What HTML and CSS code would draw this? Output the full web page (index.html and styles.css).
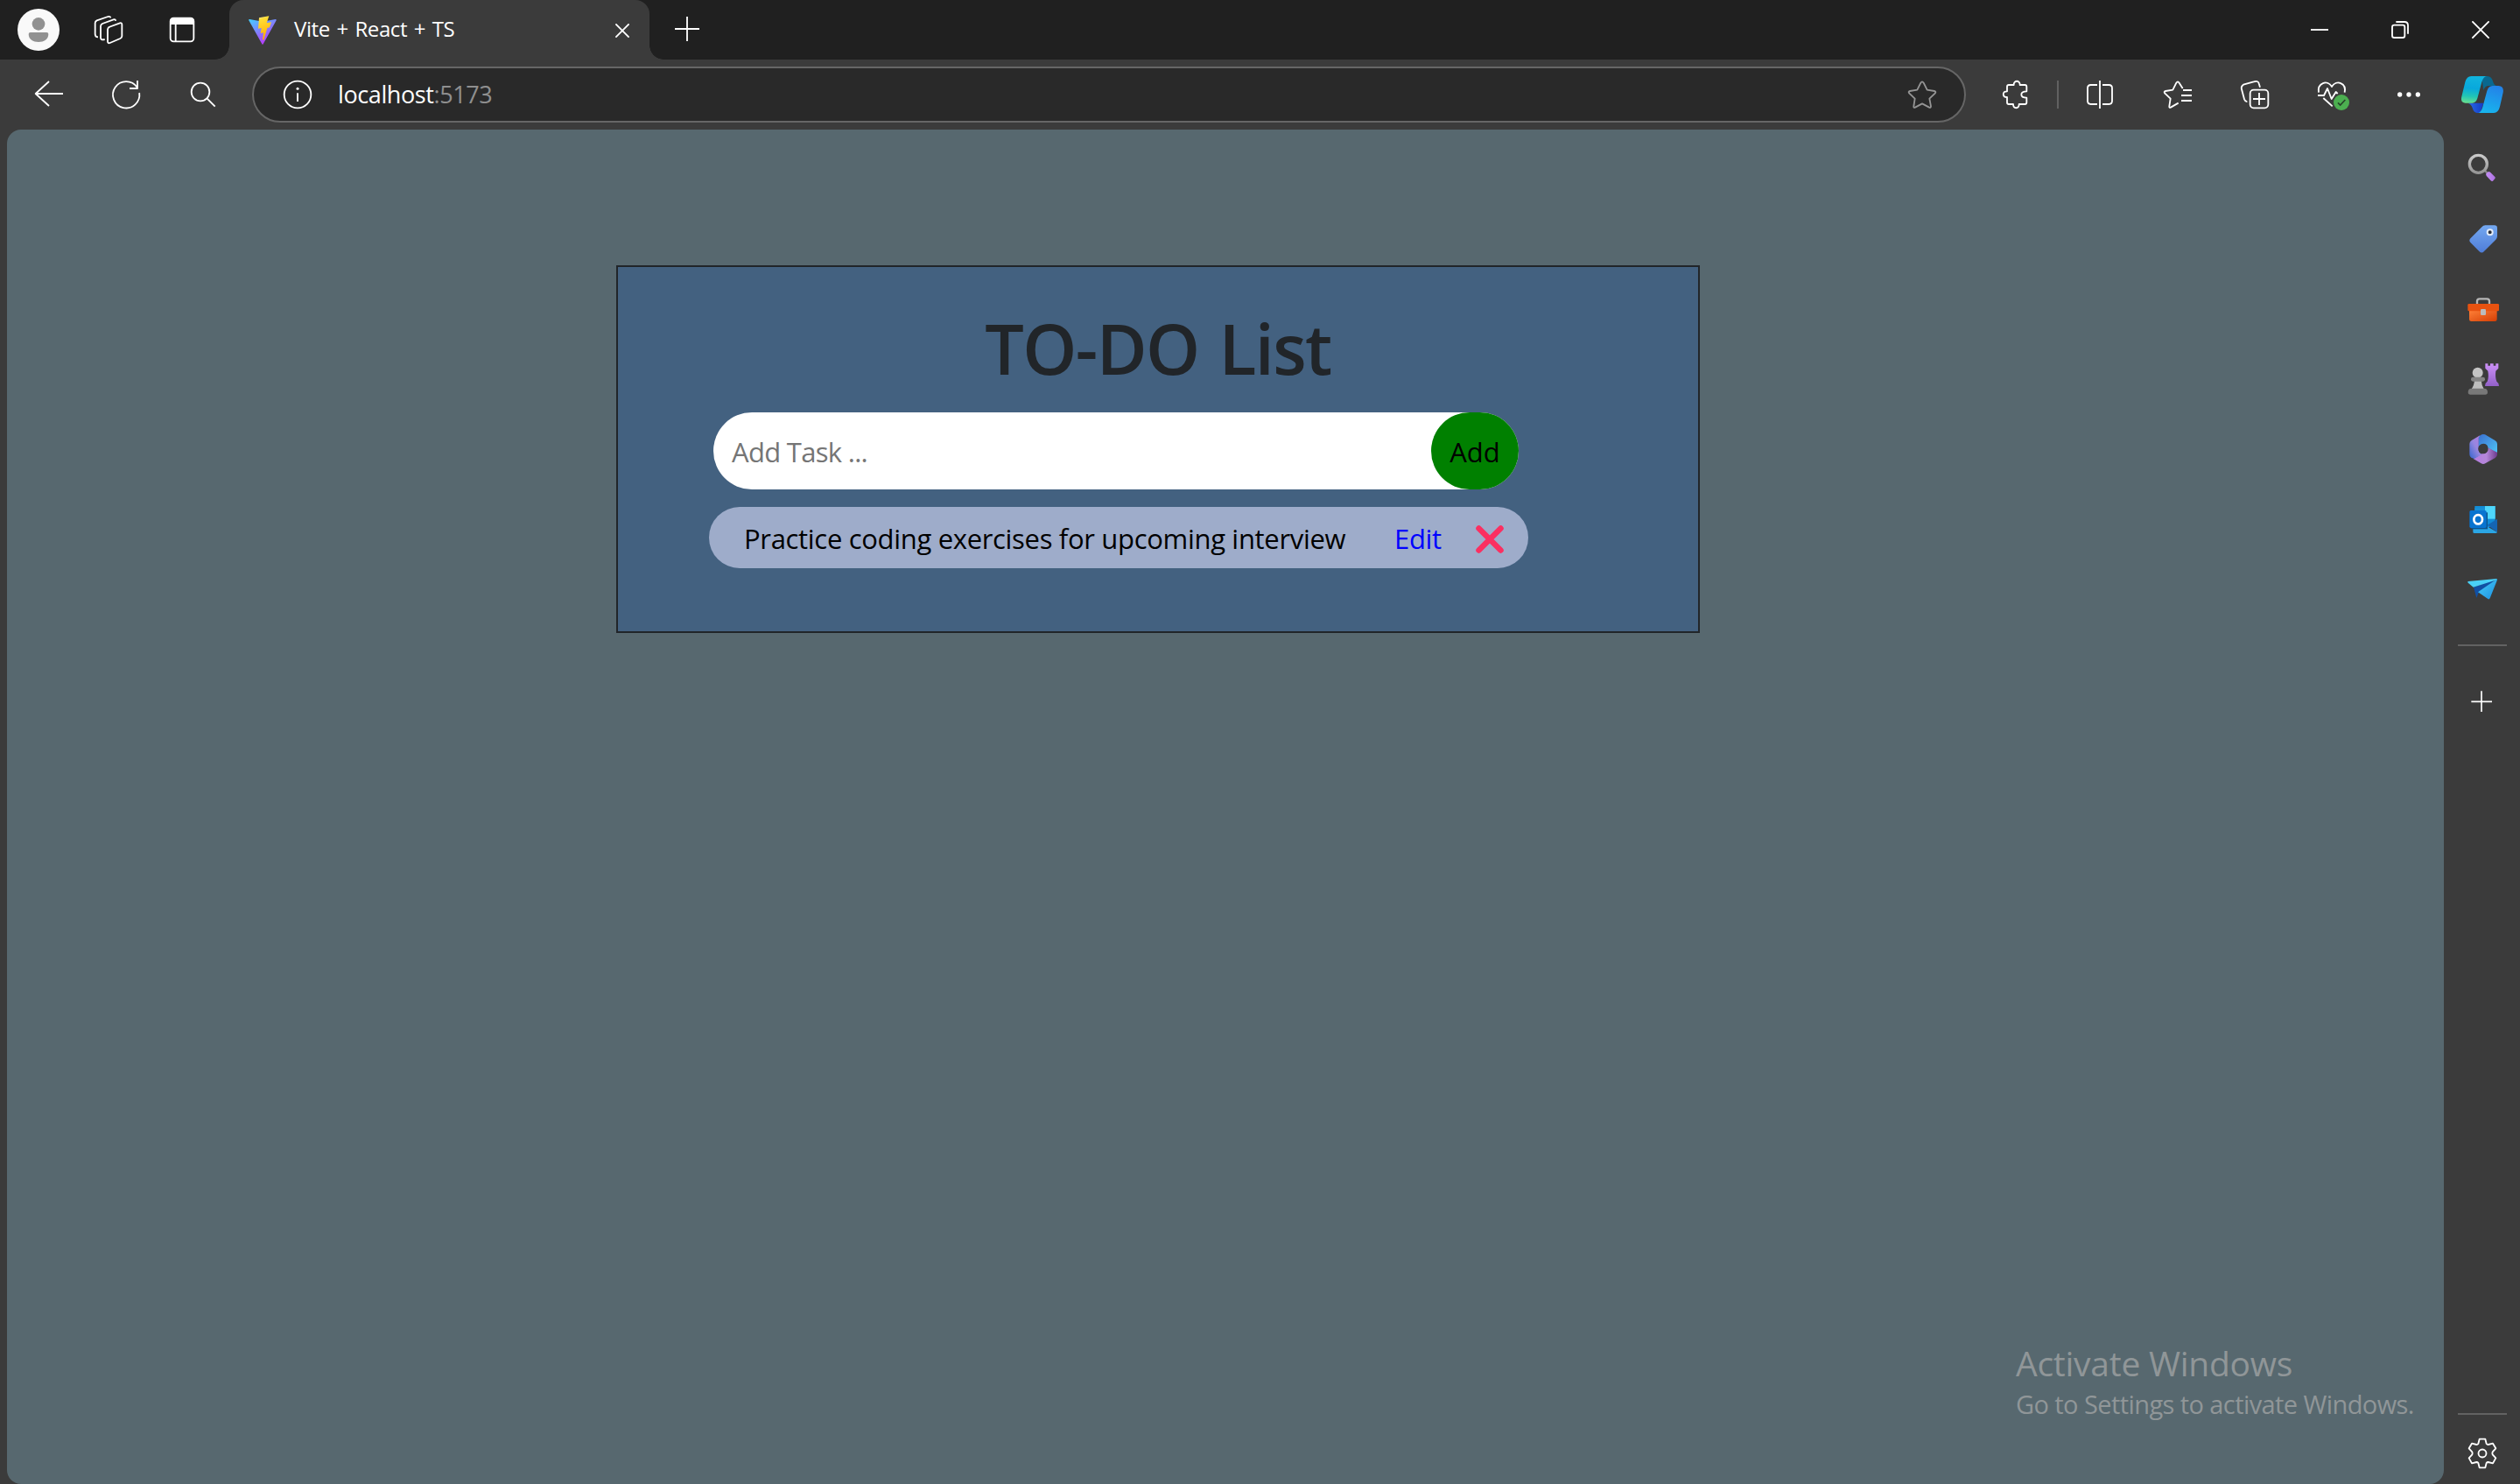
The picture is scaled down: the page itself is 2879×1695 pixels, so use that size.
FILE: index.html
```html
<!DOCTYPE html>
<html lang="en">
<head>
<meta charset="utf-8">
<title>Vite + React + TS</title>
<link rel="stylesheet" href="styles.css">
</head>
<body>
<div class="browser">
  <header class="titlebar">
    <svg class="icon avatar" viewBox="60 30 144 144"><circle cx="132" cy="102" r="72" fill="#f9f9f9"/><circle cx="132" cy="82" r="22" fill="#919191"/><path d="M104 111H160Q166 111 166 117C166 135 150 144 132 144S98 135 98 117Q98 111 104 111Z" fill="#919191"/></svg>
    <svg class="icon workspaces" viewBox="300 30 144 144"><g class="line"><path d="M373 93L411 79Q418 77 418 84V124Q418 129 412 132L377 147Q369 150 369 142V101Q369 95 375 93Z"/><path d="M359 135Q345 139 345 129V90Q345 84 351 81L389 67Q395 65 397 71"/><path d="M336 127Q326 127 326 117V79Q326 73 332 70L370 57Q378 55 379 61"/></g></svg>
    <svg class="icon tabs-menu" viewBox="552 30 144 144"><rect x="584" y="62" width="80" height="80" rx="11" class="line"/><path d="M582 84V74Q582 60 596 60H652Q666 60 666 74V84Z" fill="#fff"/><path d="M602 84V142" class="line"/></svg>
    <div class="tab">
      <svg class="favicon" viewBox="852 52 96 99"><defs><linearGradient id="va" x1="0" y1="0" x2=".6" y2="1"><stop offset="0" stop-color="#41d1ff"/><stop offset="1" stop-color="#bd34fe"/></linearGradient><linearGradient id="vb" x1=".4" y1="0" x2=".6" y2="1"><stop offset="0" stop-color="#ffea83"/><stop offset=".1" stop-color="#ffdd35"/><stop offset="1" stop-color="#ffa800"/></linearGradient></defs><path d="M852 66Q852 64 856 64L900 72L944 64Q948 64 947 68L902 149Q900 152 898 149Z" fill="url(#va)"/><path d="M888 59L922 53L914 77L930 74L924 92L916 94L904 135L900 134L903 110L893 112L896 94L885 96Z" fill="url(#vb)"/></svg>
      <span class="tab-title">Vite + React + TS</span>
      <svg class="tab-close" viewBox="0 0 48 48"><path class="line" d="M1 1L47 47M47 1L1 47"/></svg>
    </div>
    <svg class="new-tab" viewBox="0 0 84 84"><path class="line" d="M42 0V84M0 42H84"/></svg>
    <div class="window-controls">
      <svg viewBox="0 0 60 60"><path class="line" d="M0 30H60"/></svg>
      <svg viewBox="0 0 60 60"><g class="line"><rect x="3" y="14" width="43" height="43" rx="7"/><path d="M16 3H45Q57 3 57 15V44"/></g></svg>
      <svg viewBox="0 0 60 60"><path class="line" d="M1 1L59 59M59 1L1 59"/></svg>
    </div>
  </header>

  <nav class="toolbar">
    <div class="nav-buttons">
      <svg class="icon" viewBox="96 252 144 144"><path class="line" d="M122 321H216M168 279L122 321L168 363"/></svg>
      <svg class="icon" viewBox="360 252 144 144"><path class="line" d="M477.500 318A45.500 45.500 0 1 1 470 299M471 276V303H444"/></svg>
      <svg class="icon" viewBox="624 252 144 144"><g class="line"><circle cx="687" cy="315" r="31"/><path d="M710 338L737 365"/></g></svg>
    </div>
    <div class="address">
      <svg class="icon info" viewBox="948 252 144 144"><g class="line"><circle cx="1020" cy="324" r="46"/><path d="M1020 319V348"/></g><circle cx="1020" cy="304" r="4.500" fill="#fff"/></svg>
      <div class="url">localhost<span class="port">:5173</span></div>
      <svg class="icon" viewBox="96 252 144 144"><path class="line muted" d="M163 284Q168 276 173 284L185 308L210 312Q217 314 212 320L193 338L198 364Q198 370 192 368L168 355L144 368Q138 370 139 364L143 338L124 320Q119 314 126 312L151 308Z"/></svg>
    </div>
    <div class="actions">
      <svg class="icon" viewBox="414 252 144 144"><path class="line" d="M465 291H482C481 274 504 274 503 291H520Q526 291 526 297V313C502 313 502 335 526 335V351Q526 357 520 357H500C500 374 480 374 480 357H465Q459 357 459 351V333C442 333 442 313 459 313V297Q459 291 465 291Z"/></svg>
      <span class="separator"></span>
      <svg class="icon" viewBox="708 252 144 144"><path class="line" d="M768 291H746Q735 291 735 302V346Q735 357 746 357H768M786 291H808Q819 291 819 302V346Q819 357 808 357H786M777 276V372"/></svg>
      <svg class="icon" viewBox="972 252 144 144"><path class="line" d="M1061 303L1049 284Q1044 276 1039 284L1027 308L1002 312Q995 314 1000 320L1019 338L1015 364Q1014 370 1020 368L1046 353M1062 309H1092M1056 327H1092M1056 345H1092"/></svg>
      <svg class="icon" viewBox="156 252 144 144"><g class="line"><rect x="212" y="308" width="62" height="62" rx="12"/><path d="M243 318V360M222 339H264M202 348Q196 349 192 340L183 306Q180 296 189 290L224 280Q239 275 242 286L246 299"/></g></svg>
      <svg class="icon" viewBox="420 252 144 144"><path class="line" d="M447 317C442 284 476 272 492 297C508 272 543 284 536 317M444 327H465L477 303L491 339L506 315L512 321M463 336L494 364"/><circle cx="525" cy="351" r="27" fill="#4caf50"/><path d="M513 352L521 360L538 342" fill="none" stroke="#26442a" stroke-width="5"/></svg>
      <svg class="icon" viewBox="684 252 144 144"><g fill="#fff"><circle cx="725" cy="324" r="8"/><circle cx="756" cy="324" r="8"/><circle cx="787" cy="324" r="8"/></g></svg>
    </div>
    <svg class="icon copilot" viewBox="936 252 144 144"><defs><linearGradient id="ca" x1=".4" y1="0" x2=".3" y2="1"><stop offset="0" stop-color="#11b4de"/><stop offset=".45" stop-color="#08a8dc"/><stop offset=".75" stop-color="#22c5b4"/><stop offset="1" stop-color="#67df91"/></linearGradient><linearGradient id="cb" x1=".6" y1="0" x2=".3" y2="1"><stop offset="0" stop-color="#2383e8"/><stop offset="1" stop-color="#18b5ed"/></linearGradient><linearGradient id="cc"><stop offset="0" stop-color="#2b6ce8"/><stop offset="1" stop-color="#123bc4"/></linearGradient></defs><path d="M1005 261H1026Q1039 262 1044 278Q1048 293 1058 294H1030Q1018 293 1012 309Z" fill="#09688f"/><path d="M958 353H1012L1001 387H990Q979 387 974 370Q970 356 958 353Z" fill="url(#cc)"/><path d="M970 261H1023Q1012 262 1006 281L991 337Q986 353 973 353H950Q932 352 937 331L949 281Q954 262 970 261Z" fill="url(#ca)"/><path d="M1043 294H1063Q1083 295 1079 317L1068 365Q1063 386 1047 387H994Q1004 384 1009 367L1024 311Q1029 295 1043 294Z" fill="url(#cb)"/></svg>
  </nav>

  <div class="content">
    <main class="page">
      <section class="card">
        <h1 class="heading">TO-DO List</h1>
        <form class="add-form">
          <span class="placeholder">Add Task ...</span>
          <button class="add-button" type="button"><span>Add</span></button>
        </form>
        <div class="task">
          <span class="task-name">Practice coding exercises for upcoming interview</span>
          <span class="edit">Edit</span>
          <svg class="delete" viewBox="0 0 32 32"><path d="M3.500 3.500L28.500 28.500M28.500 3.500L3.500 28.500" fill="none" stroke="#fb2f61" stroke-width="6.500" stroke-linecap="round"/></svg>
        </div>
      </section>
      <div class="activation">
        <div class="activation-title">Activate Windows</div>
        <div class="activation-text">Go to Settings to activate Windows.</div>
      </div>
    </main>

    <aside class="sidebar">
      <div class="apps">
        <svg viewBox="111 66 120 120"><defs><linearGradient id="sa" x1="0" y1="0" x2="0" y2="1"><stop offset="0" stop-color="#c9c9c9"/><stop offset="1" stop-color="#969696"/></linearGradient><linearGradient id="sb"><stop offset="0" stop-color="#c490f4"/><stop offset="1" stop-color="#ad70e2"/></linearGradient></defs><path d="M179 134L190 145" stroke="#888" stroke-width="7"/><circle cx="157" cy="112" r="30" fill="none" stroke="url(#sa)" stroke-width="10"/><path d="M184 145L192 138Q196 138 199 141L214 156Q217 159 214 162L207 170Q203 172 200 169L186 154Q182 149 184 145Z" fill="url(#sb)"/></svg>
        <svg viewBox="111 306 120 120"><defs><linearGradient id="sc" x1="0" y1="0" x2="0" y2="1"><stop offset="0" stop-color="#74a8f0"/><stop offset="1" stop-color="#4f7dd8"/></linearGradient></defs><path d="M181 322H212Q222 322 222 332V359Q222 366 217 371L177 411Q169 420 160 411L131 382Q123 374 131 366L170 327Q174 322 181 322Z" fill="url(#sc)"/><circle cx="197" cy="346" r="9" fill="#282d38" stroke="#e4edf9" stroke-width="6"/></svg>
        <svg viewBox="111 546 120 120"><defs><linearGradient id="sd" x1="0" y1="0" x2="1" y2="1"><stop offset="0" stop-color="#ff8138"/><stop offset="1" stop-color="#d43e05"/></linearGradient></defs><path d="M153 592V582Q153 574 161 574H187Q195 574 195 582V592" fill="none" stroke="#b6b6b6" stroke-width="7"/><path d="M126 612H221V644Q221 651 214 651H133Q126 651 126 644Z" fill="url(#sd)"/><rect x="121" y="591" width="107" height="25" rx="4" fill="#e85210"/><rect x="165" y="609" width="18" height="21" rx="4" fill="#bcbcbc"/></svg>
        <svg viewBox="111 786 120 120"><defs><linearGradient id="se" x1="0" y1="0" x2="0" y2="1"><stop offset="0" stop-color="#cd91f8"/><stop offset="1" stop-color="#9260c8"/></linearGradient></defs><path d="M181 796H190V803H198V796H209V803H217V796H226V812L217 821Q214 842 220 857Q228 862 228 873H180Q180 862 188 857Q194 842 190 821L181 812Z" fill="url(#se)"/><circle cx="155" cy="827" r="18" fill="#c4c4c4"/><path d="M144 852H167Q168 871 177 884H133Q143 871 144 852Z" fill="#bdbdbd"/><rect x="132" y="842" width="48" height="15" rx="7" fill="#858585"/><path d="M122 894Q122 881 134 881H177Q189 881 189 894Q189 902 181 902H130Q122 902 122 894Z" fill="#787878"/></svg>
        <svg viewBox="111 66 120 120"><defs><linearGradient id="ma" x1="0" y1="0" x2="1" y2="1"><stop offset="0" stop-color="#3b6fd0"/><stop offset="1" stop-color="#4fc5f4"/></linearGradient><linearGradient id="mb" x1="1" y1="0" x2="0" y2="1"><stop offset="0" stop-color="#b97be0"/><stop offset=".5" stop-color="#9686df"/><stop offset="1" stop-color="#3566d0"/></linearGradient><linearGradient id="mc" x1="0" y1="0" x2="1" y2="0"><stop offset="0" stop-color="#b67ce2"/><stop offset=".55" stop-color="#b587d8"/><stop offset="1" stop-color="#6d3a8c"/></linearGradient></defs><path d="M157 86L169 79Q174 77 180 79L214 99Q222 103 222 111V143L189 124Q190 111 174 110Q163 111 157 123Z" fill="url(#ma)"/><path d="M222 140V147Q222 155 215 159L181 178Q174 182 167 178L140 162L170 145Q185 143 189 124Z" fill="url(#mc)"/><path d="M163 82L158 90V133Q160 145 171 146L143 162L133 158Q127 154 127 147V111Q127 103 134 99Z" fill="url(#mb)"/><circle cx="174" cy="128" r="17" fill="#3b3b3b"/></svg>
        <svg viewBox="111 306 120 120"><path d="M145 324H215V396H145Z" fill="#118cd7"/><path d="M180 324H215V368H180Z" fill="#4ed6fb"/><path d="M145 330H180V355H145Z" fill="#168fd6"/><path d="M222 368L188 389L222 414Z" fill="#1565b2"/><path d="M139 391L180 389L222 414Q220 417 216 417H143Q139 417 139 413Z" fill="#2ba6e5"/><path d="M133 346H189V403H133Z" fill="#0b548c"/><rect x="127" y="339" width="58" height="60" rx="5" fill="#0874d0"/><ellipse cx="156.500" cy="370" rx="14.500" ry="15.500" fill="none" stroke="#fff" stroke-width="8"/></svg>
        <svg viewBox="111 546 120 120"><defs><linearGradient id="ta" x1="0" y1="0" x2="1" y2="1"><stop offset="0" stop-color="#45cef8"/><stop offset="1" stop-color="#1d8ee0"/></linearGradient></defs><path d="M141 602L220 574L158 622L151 639Z" fill="#114fa3"/><path d="M122 582L220 573Q222 574 220 577L140 602L122 587Q119 584 122 582Z" fill="#4ad0f7"/><path d="M221 574Q222 577 221 580L197 640Q194 645 190 642L156 619Z" fill="url(#ta)"/></svg>
      </div>
      <span class="rule"></span>
      <svg class="add-app" viewBox="111 933 120 120"><path d="M168 958V1029M133 994H204" fill="none" stroke="#fff" stroke-width="5"/></svg>
      <span class="rule rule-bottom"></span>
      <svg class="settings" viewBox="111 150 120 120"><g class="line"><circle cx="171" cy="210" r="13.500"/><path d="M161 161H181L185 177Q187 180 191 180L207 176L217 193L206 205Q204 210 206 214L217 226L207 244L191 240Q187 240 185 243L181 259H161L157 243Q155 240 151 240L135 244L125 226L136 214Q138 210 136 205L125 193L135 176L151 180Q155 180 157 177Z"/></g></svg>
    </aside>
  </div>
</div>
</body>
</html>
```
FILE: styles.css
```css
* { box-sizing: border-box; }
body {
  margin: 0;
  background: #3b3b3b;
  font-family: "Open Sans", "Noto Sans", sans-serif;
  font-kerning: none;
}
svg { display: block; flex: none; }
span, h1, div { white-space: nowrap; }

.browser {
  display: flex;
  flex-direction: column;
  width: 2879px;
  height: 1695px;
  overflow: hidden;
}
.line {
  fill: none;
  stroke: #fff;
  stroke-width: 5.500;
  stroke-linecap: butt;
  stroke-linejoin: round;
}
.muted { stroke: #959595; }
.icon { width: 48px; height: 48px; }

/* Title bar */
.titlebar {
  display: flex;
  align-items: center;
  height: 68px;
  flex: none;
  padding-left: 20px;
  background: #202020;
}
.workspaces { margin-left: 32px; }
.tabs-menu { margin-left: 36px; }
.tab {
  position: relative;
  display: flex;
  align-items: center;
  align-self: stretch;
  width: 480px;
  margin-left: 30px;
  padding: 0 23px 0 22px;
  border-radius: 16px 16px 0 0;
  background: #3b3b3b;
}
.tab::before,
.tab::after {
  content: "";
  position: absolute;
  bottom: 0;
  width: 16px;
  height: 16px;
}
.tab::before {
  left: -16px;
  background: radial-gradient(circle at 0 0, #202020 15.500px, #3b3b3b 16px);
}
.tab::after {
  right: -16px;
  background: radial-gradient(circle at 100% 0, #202020 15.500px, #3b3b3b 16px);
}
.favicon { width: 32px; height: 33px; }
.tab-title {
  flex: 1;
  margin-left: 20px;
  padding-bottom: 2px;
  color: #fff;
  font-size: 24px;
  line-height: 32px;
  letter-spacing: -0.400px;
  word-spacing: 1.800px;
}
.tab-close { width: 16px; height: 16px; margin-top: 2px; }
.new-tab { width: 28px; height: 28px; margin: -2px 0 0 29px; }
.window-controls {
  display: flex;
  gap: 72px;
  margin-left: auto;
  padding-right: 35px;
}
.window-controls svg { width: 20px; height: 20px; }

/* Toolbar */
.toolbar {
  display: flex;
  align-items: center;
  height: 80px;
  flex: none;
  padding-left: 32px;
}
.nav-buttons { display: flex; gap: 40px; }
.address {
  display: flex;
  align-items: center;
  width: 1958px;
  height: 64px;
  margin-left: 32px;
  padding: 0 24px 0 26px;
  border: 2px solid #666;
  border-radius: 32px;
  background: #292929;
}
.url {
  flex: 1;
  margin-left: 22px;
  color: #fff;
  font-size: 27px;
  line-height: 38px;
  letter-spacing: -0.400px;
}
.port { color: #8f8f8f; }
.actions {
  display: flex;
  align-items: center;
  gap: 40px;
  margin-left: 32px;
}
.separator {
  width: 2px;
  height: 32px;
  margin: 0 -16px;
  background: #616161;
}
.copilot { margin-left: 36px; }

/* Page */
.content { display: flex; flex: 1; min-height: 0; }
.page {
  display: flex;
  flex-direction: column;
  justify-content: space-between;
  width: 2784px;
  margin-left: 8px;
  padding: 155px 35px 71px 696px;
  border-radius: 16px;
  background: #57686f;
}
.card {
  display: flex;
  flex-direction: column;
  width: 1238px;
  height: 420px;
  border: 2px solid #212529;
  background: #436180;
}
.heading {
  margin: 45px 0 0;
  color: #212529;
  font-size: 79px;
  font-weight: 600;
  line-height: 96px;
  letter-spacing: -1.600px;
  word-spacing: 4px;
  text-align: center;
}
.add-form {
  display: flex;
  align-items: center;
  justify-content: space-between;
  width: 920px;
  height: 88px;
  margin: 25px 0 0 109px;
  padding-left: 21px;
  border-radius: 44px;
  background: #fff;
  font-size: 31px;
}
.placeholder { padding-top: 2px; color: #757575; letter-spacing: -0.700px; }
.add-button {
  width: 100px;
  height: 88px;
  padding: 2px 0 0;
  border: 0;
  border-radius: 44px;
  background: #008000;
  color: #000;
  font: inherit;
}
.task {
  display: flex;
  align-items: center;
  width: 936px;
  height: 70px;
  margin: 20px 0 0 104px;
  padding: 3px 0 0 40px;
  border-radius: 35px;
  background: #9eacca;
  color: #000;
  font-size: 31px;
  letter-spacing: -0.320px;
}
.task-name { width: 743px; padding-bottom: 1px; }
.edit { width: 93px; padding-bottom: 1px; color: #00f; }
.delete { width: 32px; height: 32px; }
.activation {
  align-self: flex-end;
  width: 454px;
  color: #909698;
}
.activation-title { font-size: 39px; line-height: 54px; letter-spacing: -0.250px; }
.activation-text { font-size: 29px; line-height: 40px; letter-spacing: -0.580px; }

/* Sidebar */
.sidebar {
  display: flex;
  flex-direction: column;
  flex: 1;
  padding: 24px 0 15px 16px;
}
.apps { display: flex; flex-direction: column; gap: 40px; }
.sidebar svg { width: 40px; height: 40px; margin-left: 8px; }
.rule {
  width: 56px;
  height: 2px;
  margin-top: 44px;
  background: #626262;
}
.sidebar .add-app { margin-top: 43px; }
.rule-bottom { margin-top: auto; }
.sidebar .settings { margin-top: 24px; }
```
